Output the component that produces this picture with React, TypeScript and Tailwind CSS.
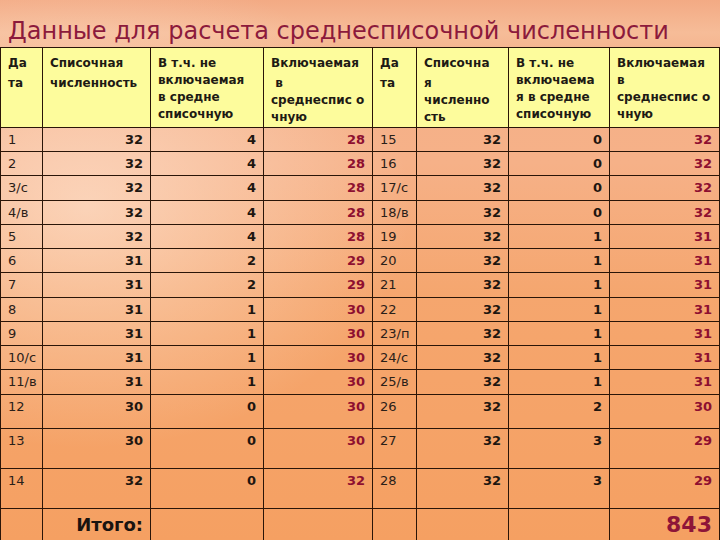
type Row = [string, number, number, number];

const leftRows: Row[] = [
  ["1", 32, 4, 28],
  ["2", 32, 4, 28],
  ["3/с", 32, 4, 28],
  ["4/в", 32, 4, 28],
  ["5", 32, 4, 28],
  ["6", 31, 2, 29],
  ["7", 31, 2, 29],
  ["8", 31, 1, 30],
  ["9", 31, 1, 30],
  ["10/с", 31, 1, 30],
  ["11/в", 31, 1, 30],
  ["12", 30, 0, 30],
  ["13", 30, 0, 30],
  ["14", 32, 0, 32],
];

const rightRows: Row[] = [
  ["15", 32, 0, 32],
  ["16", 32, 0, 32],
  ["17/с", 32, 0, 32],
  ["18/в", 32, 0, 32],
  ["19", 32, 1, 31],
  ["20", 32, 1, 31],
  ["21", 32, 1, 31],
  ["22", 32, 1, 31],
  ["23/п", 32, 1, 31],
  ["24/с", 32, 1, 31],
  ["25/в", 32, 1, 31],
  ["26", 32, 2, 30],
  ["27", 32, 3, 29],
  ["28", 32, 3, 29],
];

// rows 1-11 are ~24.2px in the picture, so a few get an extra pixel
const rowHeights = [
  "h-[24px]", "h-[24px]", "h-[25px]", "h-[24px]", "h-[24px]", "h-[24px]",
  "h-[25px]", "h-[24px]", "h-[24px]", "h-[24px]", "h-[25px]",
  "h-[34px]", "h-[40px]", "h-[40px]",
];

const cell = "border-[1.5px] border-[#2a1508] align-top p-0";
const head = `${cell} bg-[#fdfc9c] pl-[7px] pt-[7px] text-[12px] leading-[17px] font-bold text-[#1e1a14]`;
const date = "pl-[7px] pt-[3px] leading-[18px] text-[13px] text-[#2a2018]";
const num = "pr-[7px] pt-[3px] leading-[18px] text-[13px] font-bold text-right text-[#1e1610]";
const red = "pr-[7px] pt-[3px] leading-[18px] text-[13px] font-bold text-right text-[#8e0f30]";

function HeadLines({ lines, gap }: { lines: string[]; gap?: boolean }) {
  return (
    <>
      {lines.map((l, i) => (
        <div key={i} className={gap && i === 1 ? "mt-[3px] whitespace-pre" : "whitespace-pre"}>
          {l}
        </div>
      ))}
    </>
  );
}

export default function App() {
  return (
    <div className="w-[720px] h-[540px] overflow-hidden font-['DejaVu_Sans',sans-serif] bg-[radial-gradient(ellipse_45%_45%_at_12%_38%,rgba(255,236,222,0.6),transparent),linear-gradient(180deg,#f3aa84_0%,#f6bc98_6%,#f4b088_12%,#f6b188_30%,#f5a66e_55%,#f5a062_100%)]">
      <div className="h-[47px] pl-[8px] pt-[17px] text-[24px] leading-[28px] text-[#8c1a3c] whitespace-nowrap">
        Данные для расчета среднесписочной численности
      </div>
      <table className="table-fixed border-collapse w-[719px]">
        <colgroup>
          <col className="w-[42px]" />
          <col className="w-[108px]" />
          <col className="w-[113px]" />
          <col className="w-[109px]" />
          <col className="w-[44px]" />
          <col className="w-[92px]" />
          <col className="w-[101px]" />
          <col className="w-[110px]" />
        </colgroup>
        <thead>
          <tr className="h-[80px]">
            <th className={`${head} text-left`}><HeadLines gap lines={["Да", "та"]} /></th>
            <th className={`${head} text-left`}><HeadLines gap lines={["Списочная", "численность"]} /></th>
            <th className={`${head} text-left`}><HeadLines lines={["В т.ч. не", "включаемая", "в средне", "списочную"]} /></th>
            <th className={`${head} text-left`}><HeadLines gap lines={["Включаемая", " в", "среднеспис о", "чную"]} /></th>
            <th className={`${head} text-left`}><HeadLines gap lines={["Да", "та"]} /></th>
            <th className={`${head} text-left`}><HeadLines gap lines={["Списочна", "я", "численно", "сть"]} /></th>
            <th className={`${head} text-left`}><HeadLines lines={["В т.ч. не", "включаема", "я в средне", "списочную"]} /></th>
            <th className={`${head} text-left`}><HeadLines lines={["Включаемая", "в", "среднеспис о", "чную"]} /></th>
          </tr>
        </thead>
        <tbody>
          {leftRows.map((l, i) => {
            const r = rightRows[i];
            return (
              <tr key={i} className={rowHeights[i]}>
                <td className={`${cell} ${date}`}>{l[0]}</td>
                <td className={`${cell} ${num}`}>{l[1]}</td>
                <td className={`${cell} ${num}`}>{l[2]}</td>
                <td className={`${cell} ${red}`}>{l[3]}</td>
                <td className={`${cell} ${date}`}>{r[0]}</td>
                <td className={`${cell} ${num}`}>{r[1]}</td>
                <td className={`${cell} ${num}`}>{r[2]}</td>
                <td className={`${cell} ${red}`}>{r[3]}</td>
              </tr>
            );
          })}
          <tr className="h-[40px]">
            <td className={cell}></td>
            <td className={`${cell} pr-[7px] pt-[4px] text-right text-[18px] leading-[24px] font-bold text-[#1a1410]`}>Итого:</td>
            <td className={cell}></td>
            <td className={cell}></td>
            <td className={cell}></td>
            <td className={cell}></td>
            <td className={cell}></td>
            <td className={`${cell} pr-[7px] pt-[1px] text-right text-[22px] leading-[30px] font-bold text-[#8e1538]`}>843</td>
          </tr>
        </tbody>
      </table>
    </div>
  );
}
